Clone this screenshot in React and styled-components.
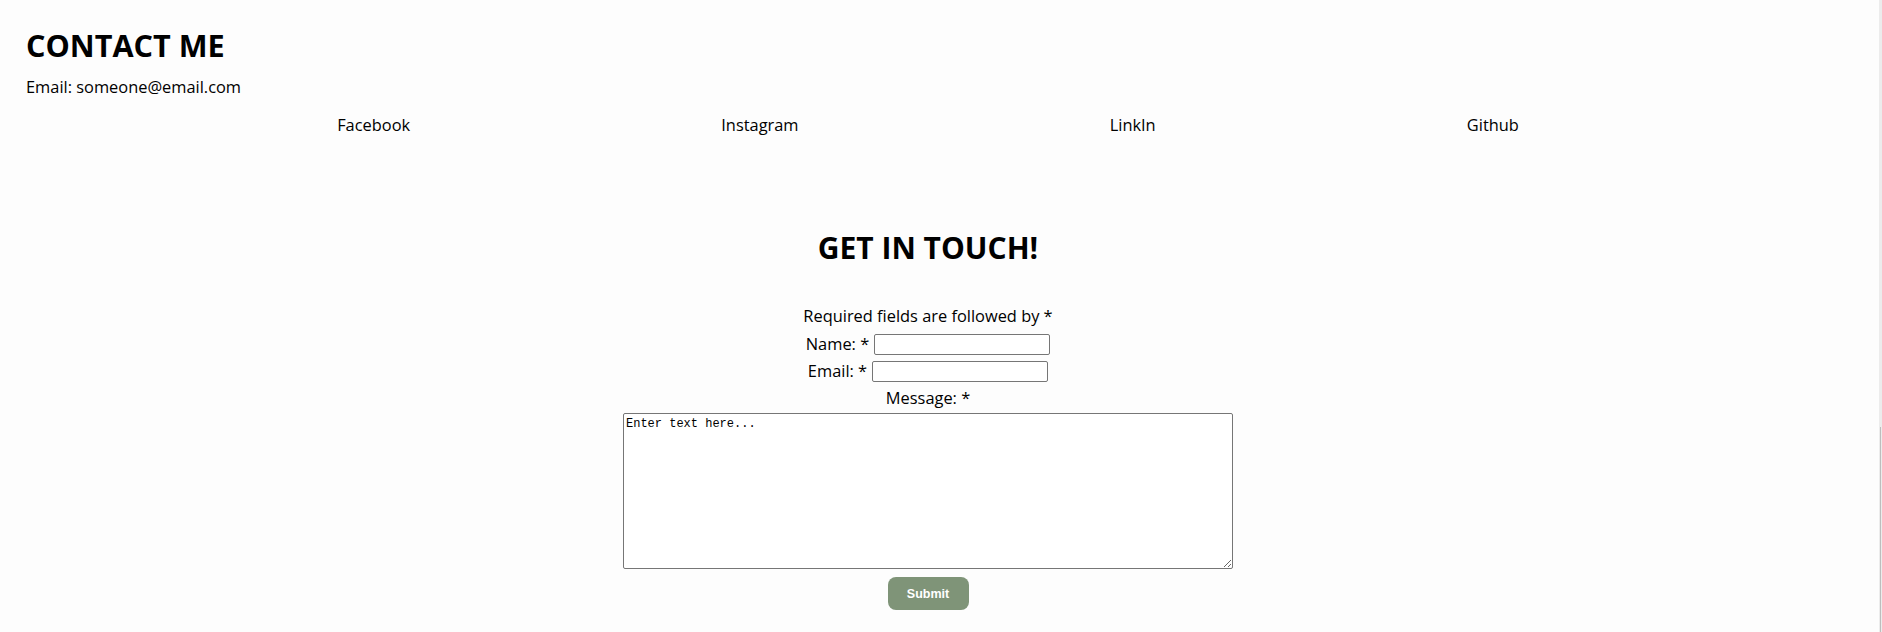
import React from "react";
import styled, { createGlobalStyle } from "styled-components";

const GlobalStyle = createGlobalStyle`
  html, body {
    margin: 0;
    padding: 0;
    background: #fdfdfd;
  }
  body {
    font-family: "Open Sans", "Noto Sans", sans-serif;
    color: #000;
  }
`;

const Page = styled.main`
  padding: 27px 52px 0 26px;
`;

const Title = styled.h1`
  margin: 0;
  font-size: 30.6px;
  line-height: 36px;
  font-weight: 700;
`;

const EmailLine = styled.p`
  margin: 14px 0 0;
  font-size: 16.4px;
  line-height: 20px;
`;

const LinkRow = styled.nav`
  display: flex;
  justify-content: space-evenly;
  margin-top: 18px;
`;

const SocialLink = styled.a`
  color: #000;
  text-decoration: none;
  font-size: 16.4px;
  line-height: 20px;
`;

const SubTitle = styled.h2`
  margin: 95px 0 0;
  text-align: center;
  font-size: 30px;
  line-height: 36px;
  font-weight: 700;
`;

const Form = styled.form`
  display: flex;
  flex-direction: column;
  align-items: center;
  margin-top: 40px;
`;

const Note = styled.p`
  margin: 0 0 8px;
  font-size: 16.4px;
  line-height: 20px;
`;

const FieldRow = styled.div`
  display: flex;
  align-items: center;
  gap: 5px;
  margin-bottom: ${(p) => p.$mb || 0}px;
`;

const Label = styled.label`
  font-size: 16.4px;
  line-height: 17px;
  padding-bottom: 2px;
`;

const TextInput = styled.input`
  box-sizing: border-box;
  width: 176px;
  height: 21px;
  margin: 0;
  padding: 1px 2px;
  border: 1px solid #767676;
  border-radius: 2px;
  background: #fff;
  font-size: 13px;
`;

const MessageLabel = styled.label`
  margin-top: 6px;
  font-size: 16.4px;
  line-height: 20px;
`;

const MessageBox = styled.textarea`
  box-sizing: border-box;
  width: 610px;
  height: 156px;
  margin: 5px 0 0;
  padding: 3px 2px 2px;
  border: 1px solid #767676;
  border-radius: 2px;
  background: #fff;
  font-family: "Liberation Mono", "DejaVu Sans Mono", monospace;
  font-size: 12px;
  line-height: 14px;
  color: #000;

  &::placeholder {
    color: #000;
    opacity: 1;
  }
`;

const SubmitButton = styled.button`
  width: 81px;
  height: 33px;
  margin-top: 8px;
  border: none;
  border-radius: 8px;
  background: #7f9478;
  color: #fff;
  font-family: "Liberation Sans", Arial, sans-serif;
  font-size: 12.5px;
  font-weight: 700;
  cursor: pointer;
`;

const ScrollTrack = styled.div`
  position: fixed;
  top: 0;
  right: 0;
  width: 3px;
  height: 100%;
  background: #ececec;
`;

const ScrollThumb = styled.div`
  position: absolute;
  left: 1px;
  bottom: 0;
  width: 1px;
  height: 205px;
  background: #bdbdbd;
`;

const links = ["Facebook", "Instagram", "LinkIn", "Github"];

export default function App() {
  return (
    <>
      <GlobalStyle />
      <Page>
        <Title>CONTACT ME</Title>
        <EmailLine>Email: someone@email.com</EmailLine>
        <LinkRow>
          {links.map((l) => (
            <SocialLink key={l} href="#">
              {l}
            </SocialLink>
          ))}
        </LinkRow>
        <SubTitle>GET IN TOUCH!</SubTitle>
        <Form onSubmit={(e) => e.preventDefault()}>
          <Note>Required fields are followed by *</Note>
          <FieldRow $mb={6}>
            <Label htmlFor="name">Name: *</Label>
            <TextInput id="name" type="text" />
          </FieldRow>
          <FieldRow>
            <Label htmlFor="email">Email: *</Label>
            <TextInput id="email" type="email" />
          </FieldRow>
          <MessageLabel htmlFor="message">Message: *</MessageLabel>
          <MessageBox id="message" placeholder="Enter text here..." />
          <SubmitButton type="submit">Submit</SubmitButton>
        </Form>
      </Page>
      <ScrollTrack>
        <ScrollThumb />
      </ScrollTrack>
    </>
  );
}
